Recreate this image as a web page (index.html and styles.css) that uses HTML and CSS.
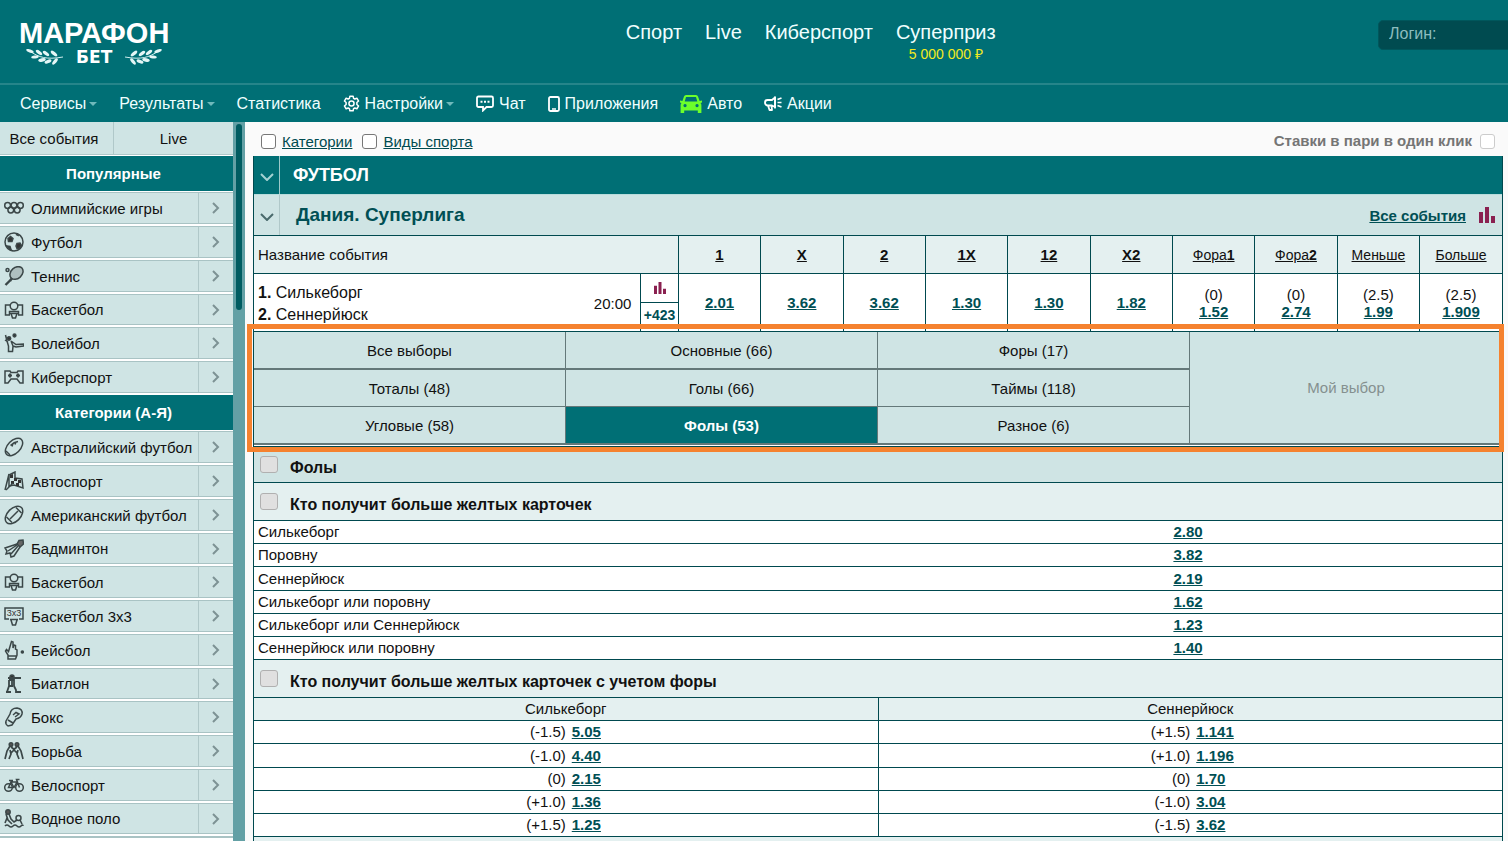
FILE: index.html
```html
<!DOCTYPE html>
<html lang="ru">
<head>
    <meta charset="UTF-8">
    <meta name="viewport" content="width=device-width, initial-scale=1.0">
    <title>Марафонбет</title>
    <link rel="stylesheet" href="styles.css">
</head>
<body>
    <!-- Icon set -->
    <svg class="sprite" xmlns="http://www.w3.org/2000/svg">
        <symbol id="arrow" viewBox="0 0 10 12"><path d="M2 1l5 5-5 5" fill="none" stroke="#7d9294" stroke-width="2"/></symbol>
        <symbol id="down" viewBox="0 0 14 8"><path d="M1 1l6 6 6-6" fill="none" stroke="currentColor" stroke-width="2"/></symbol>
        <symbol id="bars" viewBox="0 0 16 16"><path d="M0 5h4v11H0zM6 0h4v16H6zM12 9h4v7h-4z" fill="#8a2050"/></symbol>
        <symbol id="branch" viewBox="0 0 38 16">
            <path d="M5 3C13 8 20 11 37 8" fill="none" stroke="#cfeeee" stroke-width="1"/>
            <g fill="#e4f6f6">
                <ellipse cx="4" cy="2" rx="4" ry="1.5" transform="rotate(20 4 2)"/>
                <ellipse cx="13" cy="3.5" rx="3.8" ry="1.7" transform="rotate(38 13 3.5)"/>
                <ellipse cx="20" cy="4.5" rx="3.8" ry="1.7" transform="rotate(38 20 4.5)"/>
                <ellipse cx="28" cy="4.5" rx="4" ry="1.7" transform="rotate(40 28 4.5)"/>
                <ellipse cx="9" cy="8" rx="3.8" ry="1.5" transform="rotate(-8 9 8)"/>
                <ellipse cx="16" cy="11" rx="3.8" ry="1.7" transform="rotate(-12 16 11)"/>
                <ellipse cx="22" cy="12.5" rx="3.6" ry="1.7" transform="rotate(-20 22 12.5)"/>
                <ellipse cx="29" cy="12.5" rx="3.8" ry="1.7" transform="rotate(-50 29 12.5)"/>
            </g>
        </symbol>
        <symbol id="gear" viewBox="0 0 18 18"><path d="M7.3 1.2h3.4l.5 2.3 1.3.7 2.2-.8 1.8 3-1.8 1.6v2l1.8 1.6-1.8 3-2.2-.8-1.3.7-.5 2.3H7.3l-.5-2.3-1.3-.7-2.2.8-1.8-3L3.3 10V8L1.5 6.4l1.8-3 2.2.8 1.3-.7z" fill="none" stroke="#fff" stroke-width="1.6" stroke-linejoin="round"/><circle cx="9" cy="9" r="2.7" fill="none" stroke="#fff" stroke-width="1.6"/></symbol>
        <symbol id="chat" viewBox="0 0 18 17"><path d="M2.5 1.5h13q1.5 0 1.5 1.5v7.5q0 1.5-1.5 1.5h-5L7 15.5V12H2.5Q1 12 1 10.5V3q0-1.5 1.5-1.5z" fill="none" stroke="#fff" stroke-width="1.8"/><path d="M4.5 5.7h2v2h-2zM8 5.7h2v2H8zM11.5 5.7h2v2h-2z" fill="#fff"/></symbol>
        <symbol id="phone" viewBox="0 0 12 16"><rect x="1" y="1" width="10" height="14" rx="1.5" fill="none" stroke="#fff" stroke-width="1.8"/><path d="M4 13h4" stroke="#fff" stroke-width="1.5"/></symbol>
        <symbol id="car" viewBox="0 0 22 18"><path fill-rule="evenodd" d="M6 0h10q1.5 0 2 1.5L19.6 6 22 5.5v2l-1.5.6q.9.9.9 2.400V18h-3.600v-2.500H4.200V18H.6v-7.500q0-1.500.9-2.400L0 7.500v-2L2.400 6 4 1.500Q4.500 0 6 0zM6 2L4.700 6.500h12.600L16 2zM5 9a1.600 1.600 0 1 0 .1 0zM17 9a1.600 1.600 0 1 0 .1 0z" fill="#6cff2b"/></symbol>
        <symbol id="horn" viewBox="0 0 18 15"><path d="M11 1.5v9.500L8 9.500H3.500Q1 9 1 6.500T3.500 4H8zM4 9.500L5.500 14h2.500L7.500 9.500" fill="none" stroke="#fff" stroke-width="1.8" stroke-linejoin="round"/><path d="M11 .5v12M13.500 3.500l4-1.500M13.500 6.500h4M13.500 9.500l4 1.500" stroke="#fff" stroke-width="1.7"/></symbol>

        <symbol id="olympic" viewBox="0 0 20 20"><circle cx="3.6" cy="7.5" r="2.9"/><circle cx="10" cy="7.5" r="2.9"/><circle cx="16.4" cy="7.5" r="2.9"/><circle cx="6.8" cy="12" r="2.9"/><circle cx="13.2" cy="12" r="2.9"/></symbol>
        <symbol id="football" viewBox="0 0 20 20"><circle cx="10" cy="10" r="9"/><path d="M4 6.500l2.500-2L9 6.500 8 9.500H4.500zM13 11.500l3-.5 1.500 2.500-2 3H13l-1-2.500zM3 14l3 .5 1 3z" fill="#333"/><path d="M12 2l3 1.500" stroke-width="2"/></symbol>
        <symbol id="tennis" viewBox="0 0 20 20"><ellipse cx="12.5" cy="7" rx="7.3" ry="5.5" transform="rotate(-42 12.5 7)" fill="#aebfbf"/><path d="M8 12l-2 3M6.500 14L1.500 19" stroke-width="2.4"/><circle cx="3.5" cy="4" r="1.5"/></symbol>
        <symbol id="basketball" viewBox="0 0 20 20"><path d="M6 5H1.500v10h4.500M14 5h4.500v10H14M5.500 11.500h9v2h-9zM7 13.500l1.500 4.500h3l1.500-4.500"/><circle cx="10" cy="6" r="3.8"/></symbol>
        <symbol id="volleyball" viewBox="0 0 20 20"><circle cx="10.5" cy="2.5" r="1.4" fill="#333"/><circle cx="5" cy="5.5" r="1.7" fill="#333"/><path d="M1.500 2L3 8l1.500 5v5.500h4L9 13l-2-5M7 8l5 3.500 7.500-.5v2L12 14l-3-1M1 7l3 2"/></symbol>
        <symbol id="gamepad" viewBox="0 0 20 20"><path d="M1 4h5l1 1.500h6L14 4h5v12h-3l-3-4H7l-3 4H1z"/><path d="M4 8.500h4M6 6.500v4M12 8.500h4M14 6.500v4" stroke-width="2"/></symbol>
        <symbol id="aussie" viewBox="0 0 20 20"><ellipse cx="10" cy="10" rx="10.5" ry="6.3" transform="rotate(-45 10 10)"/><path d="M6.500 8.500Q10 5 14 4.500M8 9.500l1-3M11 7.500l1-2.500M2 14l4 4"/></symbol>
        <symbol id="flag" viewBox="0 0 20 20"><path d="M1 19L5 3M5 4l6-3v6l7 1 1 9-9-3-5 1z"/><path d="M6 4l3-1v4H6zM10 7h3v3h-3zM7 10h3v3H7zM14 9h3v3h-3zM12 12h3v3h-3z" fill="#333" stroke="none"/><path d="M2 19l7-7"/></symbol>
        <symbol id="amfoot" viewBox="0 0 20 20"><ellipse cx="10" cy="10" rx="10.5" ry="6.5" transform="rotate(-45 10 10)"/><path d="M6 14l8-8M2.500 12l5.500 5.500M12 2.500l5.500 5.500"/></symbol>
        <symbol id="badminton" viewBox="0 0 20 20"><path d="M13 5l2-3.500 4-.5.5 4L16 8z" fill="#666"/><path d="M13 5L1 9l2 3-1 3 4-1 1 4 3-1 6-9M13 6l-9 6M14 7l-7 8"/></symbol>
        <symbol id="hoop" viewBox="0 0 20 20"><path d="M5 13H1V2h18v11h-4M6 13.500h8M7 14l1.500 5h3l1.500-5"/></symbol>
        <symbol id="baseball" viewBox="0 0 20 20"><path d="M4 19v-4L1.500 11l1-1.500 2 2L7.500 1.500l1.500.5V8l1-3 1.500.5V9l1.500 1v5l-1.500 4zM4 16h8"/><circle cx="18.3" cy="12" r="1" fill="#333"/></symbol>
        <symbol id="biathlon" viewBox="0 0 20 20"><circle cx="8" cy="3" r="2" fill="#333"/><path d="M4 4h13M5 6v6l-2 6M5 6h5v6l2 4v2h5M5 12h4M8 6v7M7 18H2" stroke-width="1.8"/></symbol>
        <symbol id="boxing" viewBox="0 0 20 20"><path d="M2 14l4-7q1-6 7-6 6 1 5 6-1 4-6 5l-4 6-4 1q-3-2-2-5zM9 8l3-2.500 3 1.500-4 3M4 13l5 3"/></symbol>
        <symbol id="wrestling" viewBox="0 0 20 20"><circle cx="7" cy="3.5" r="1.8" fill="#555"/><circle cx="13" cy="3.5" r="1.8" fill="#555"/><path d="M6 5L3 10l-2 8M7 6l4 3M14 5l3 5 2 8M13 6L9 9M6 9l1 4-2 5M14 9l-1 4 2 5M7 12l3-3 3 3" stroke-width="1.7"/></symbol>
        <symbol id="bike" viewBox="0 0 20 20"><circle cx="4.5" cy="12.5" r="3.8"/><circle cx="15.5" cy="12.5" r="3.8"/><path d="M4.500 12.500L7 7h6l-3 5.500zM7 7l3 5.500M15.500 12.500L12.500 4.500h3M5 5.500h4M7 7V5.500"/></symbol>
        <symbol id="polo" viewBox="0 0 20 20"><circle cx="4" cy="3" r="2.2" fill="#555"/><circle cx="14.5" cy="9" r="2.5"/><path d="M2 5l2 6 4 4M5 5l2 5 3 3 3-2M16 11l2 4M3 9l-2 5M1 17q2-2 4 0t4 0 4 0 4 0 2 0" stroke-width="1.6"/></symbol>
    </svg>

    <header>
        <div class="top">
            <div class="logo">
                <a href="#" class="logoLink">
                    <span class="logoName">МАРАФОН</span>
                    <span class="logoBet">
                        <svg class="branch"><use href="#branch"/></svg>
                        <span>БЕТ</span>
                        <svg class="branch flip"><use href="#branch"/></svg>
                    </span>
                </a>
            </div>
            <nav class="mainNav">
                <a href="#">Спорт</a>
                <a href="#">Live</a>
                <a href="#">Киберспорт</a>
                <a href="#">Суперприз <small>5 000 000 ₽</small></a>
            </nav>
            <input type="text" class="login" placeholder="Логин:" aria-label="Логин">
        </div>
        <nav class="subNav">
            <a href="#" class="drop">Сервисы</a>
            <a href="#" class="drop">Результаты</a>
            <a href="#">Статистика</a>
            <a href="#" class="drop"><svg class="gear"><use href="#gear"/></svg>Настройки</a>
            <a href="#"><svg class="chat"><use href="#chat"/></svg>Чат</a>
            <a href="#"><svg class="phone"><use href="#phone"/></svg>Приложения</a>
            <a href="#"><svg class="car"><use href="#car"/></svg>Авто</a>
            <a href="#"><svg class="horn"><use href="#horn"/></svg>Акции</a>
        </nav>
    </header>

    <div class="page">
        <aside>
            <div class="sideTabs">
                <a href="#">Все события</a>
                <a href="#">Live</a>
            </div>
            <h2>Популярные</h2>
            <ul>
                <li><a href="#"><svg><use href="#olympic"/></svg><span>Олимпийские игры</span><i><svg><use href="#arrow"/></svg></i></a></li>
                <li><a href="#"><svg><use href="#football"/></svg><span>Футбол</span><i><svg><use href="#arrow"/></svg></i></a></li>
                <li><a href="#"><svg><use href="#tennis"/></svg><span>Теннис</span><i><svg><use href="#arrow"/></svg></i></a></li>
                <li><a href="#"><svg><use href="#basketball"/></svg><span>Баскетбол</span><i><svg><use href="#arrow"/></svg></i></a></li>
                <li><a href="#"><svg><use href="#volleyball"/></svg><span>Волейбол</span><i><svg><use href="#arrow"/></svg></i></a></li>
                <li><a href="#"><svg><use href="#gamepad"/></svg><span>Киберспорт</span><i><svg><use href="#arrow"/></svg></i></a></li>
            </ul>
            <h2>Категории (А-Я)</h2>
            <ul>
                <li><a href="#"><svg><use href="#aussie"/></svg><span>Австралийский футбол</span><i><svg><use href="#arrow"/></svg></i></a></li>
                <li><a href="#"><svg><use href="#flag"/></svg><span>Автоспорт</span><i><svg><use href="#arrow"/></svg></i></a></li>
                <li><a href="#"><svg><use href="#amfoot"/></svg><span>Американский футбол</span><i><svg><use href="#arrow"/></svg></i></a></li>
                <li><a href="#"><svg><use href="#badminton"/></svg><span>Бадминтон</span><i><svg><use href="#arrow"/></svg></i></a></li>
                <li><a href="#"><svg><use href="#basketball"/></svg><span>Баскетбол</span><i><svg><use href="#arrow"/></svg></i></a></li>
                <li><a href="#"><svg viewBox="0 0 20 20"><use href="#hoop"/><text x="10" y="10" class="three">3x3</text></svg><span>Баскетбол 3x3</span><i><svg><use href="#arrow"/></svg></i></a></li>
                <li><a href="#"><svg><use href="#baseball"/></svg><span>Бейсбол</span><i><svg><use href="#arrow"/></svg></i></a></li>
                <li><a href="#"><svg><use href="#biathlon"/></svg><span>Биатлон</span><i><svg><use href="#arrow"/></svg></i></a></li>
                <li><a href="#"><svg><use href="#boxing"/></svg><span>Бокс</span><i><svg><use href="#arrow"/></svg></i></a></li>
                <li><a href="#"><svg><use href="#wrestling"/></svg><span>Борьба</span><i><svg><use href="#arrow"/></svg></i></a></li>
                <li><a href="#"><svg><use href="#bike"/></svg><span>Велоспорт</span><i><svg><use href="#arrow"/></svg></i></a></li>
                <li><a href="#"><svg><use href="#polo"/></svg><span>Водное поло</span><i><svg><use href="#arrow"/></svg></i></a></li>
                <li class="blank"></li>
            </ul>
        </aside>
        <div class="scroll"><div class="thumb"></div></div>

        <main>
            <div class="filters">
                <input type="checkbox" id="cats"><label for="cats">Категории</label>
                <input type="checkbox" id="sports"><label for="sports">Виды спорта</label>
                <label for="oneClick" class="oneClick">Ставки в пари в один клик</label>
                <input type="checkbox" id="oneClick" disabled>
            </div>

            <div class="board">
                <div class="sportTitle">
                    <button type="button" aria-label="Свернуть"><svg><use href="#down"/></svg></button>
                    <h1>ФУТБОЛ</h1>
                </div>
                <div class="leagueTitle">
                    <button type="button" aria-label="Свернуть"><svg><use href="#down"/></svg></button>
                    <h2>Дания. Суперлига</h2>
                    <a href="#">Все события</a>
                    <svg class="bars"><use href="#bars"/></svg>
                </div>

                <table class="event">
                    <colgroup><col class="name"><col class="more"><col span="10"></colgroup>
                    <tr>
                        <th colspan="2">Название события</th>
                        <th><a href="#"><b>1</b></a></th>
                        <th><a href="#"><b>X</b></a></th>
                        <th><a href="#"><b>2</b></a></th>
                        <th><a href="#"><b>1X</b></a></th>
                        <th><a href="#"><b>12</b></a></th>
                        <th><a href="#"><b>X2</b></a></th>
                        <th class="small"><a href="#">Фора<b>1</b></a></th>
                        <th class="small"><a href="#">Фора<b>2</b></a></th>
                        <th class="small"><a href="#">Меньше</a></th>
                        <th class="small"><a href="#">Больше</a></th>
                    </tr>
                    <tr>
                        <td class="teams">
                            <div>
                                <p><b>1.</b> Силькеборг<br><b>2.</b> Сеннерйюск</p>
                                <time>20:00</time>
                            </div>
                        </td>
                        <td class="extra">
                            <a href="#" aria-label="Статистика"><svg><use href="#bars"/></svg></a>
                            <a href="#" class="count">+423</a>
                        </td>
                        <td><a href="#">2.01</a></td>
                        <td><a href="#">3.62</a></td>
                        <td><a href="#">3.62</a></td>
                        <td><a href="#">1.30</a></td>
                        <td><a href="#">1.30</a></td>
                        <td><a href="#">1.82</a></td>
                        <td>(0)<br><a href="#">1.52</a></td>
                        <td>(0)<br><a href="#">2.74</a></td>
                        <td>(2.5)<br><a href="#">1.99</a></td>
                        <td>(2.5)<br><a href="#">1.909</a></td>
                    </tr>
                </table>

                <div class="markets">
                    <button type="button">Все выборы</button>
                    <button type="button">Основные (66)</button>
                    <button type="button">Форы (17)</button>
                    <button type="button" class="mine" disabled>Мой выбор</button>
                    <button type="button">Тоталы (48)</button>
                    <button type="button">Голы (66)</button>
                    <button type="button">Таймы (118)</button>
                    <button type="button">Угловые (58)</button>
                    <button type="button" class="active">Фолы (53)</button>
                    <button type="button">Разное (6)</button>
                </div>

                <div class="section main">
                    <input type="checkbox" id="s1"><label for="s1">Фолы</label>
                </div>

                <div class="section">
                    <input type="checkbox" id="s2"><label for="s2">Кто получит больше желтых карточек</label>
                </div>
                <table class="odds">
                    <tr><td>Силькеборг</td><td><a href="#">2.80</a></td></tr>
                    <tr><td>Поровну</td><td><a href="#">3.82</a></td></tr>
                    <tr><td>Сеннерйюск</td><td><a href="#">2.19</a></td></tr>
                    <tr><td>Силькеборг или поровну</td><td><a href="#">1.62</a></td></tr>
                    <tr><td>Силькеборг или Сеннерйюск</td><td><a href="#">1.23</a></td></tr>
                    <tr><td>Сеннерйюск или поровну</td><td><a href="#">1.40</a></td></tr>
                </table>

                <div class="section">
                    <input type="checkbox" id="s3"><label for="s3">Кто получит больше желтых карточек с учетом форы</label>
                </div>
                <table class="odds handicap">
                    <tr><th>Силькеборг</th><th>Сеннерйюск</th></tr>
                    <tr><td><div><span>(-1.5)</span><a href="#">5.05</a></div></td><td><div><span>(+1.5)</span><a href="#">1.141</a></div></td></tr>
                    <tr><td><div><span>(-1.0)</span><a href="#">4.40</a></div></td><td><div><span>(+1.0)</span><a href="#">1.196</a></div></td></tr>
                    <tr><td><div><span>(0)</span><a href="#">2.15</a></div></td><td><div><span>(0)</span><a href="#">1.70</a></div></td></tr>
                    <tr><td><div><span>(+1.0)</span><a href="#">1.36</a></div></td><td><div><span>(-1.0)</span><a href="#">3.04</a></div></td></tr>
                    <tr><td><div><span>(+1.5)</span><a href="#">1.25</a></div></td><td><div><span>(-1.5)</span><a href="#">3.62</a></div></td></tr>
                </table>
                <div class="section"></div>
            </div>
        </main>
    </div>
</body>
</html>
```
FILE: styles.css
```css
* {
    box-sizing: border-box;
    padding: 0;
    margin: 0;
}

body {
    display: flex;
    flex-direction: column;
    height: 100vh;
    overflow: hidden;
    background-color: #fafafa;
    color: #111;
    font-family: "Liberation Sans", Arial, sans-serif;
    font-size: 15px;
}
a {
    color: inherit;
}
ul {
    list-style: none;
}
button, input {
    font: inherit;
    color: inherit;
}
.sprite {
    position: absolute;
    width: 0;
    height: 0;
}

/* Header */
header {
    flex-shrink: 0;
    background-color: #006f75;
    color: #f0ffff;
    overflow: hidden;
}
header a {
    text-decoration: none;
}
.top {
    display: flex;
    align-items: flex-start;
    height: 85px;
    border-bottom: 2px solid #26858a;
}
.logo {
    flex: 0 0 41.5%;
    padding: 18px 0 0 19px;
}
.logoLink {
    display: inline-flex;
    flex-direction: column;
    align-items: center;
    color: #fff;
    font-weight: bold;
}
.logoName {
    font-size: 29px;
    line-height: 30px;
}
.logoBet {
    display: flex;
    align-items: center;
    gap: 12px;
    font-family: "DejaVu Sans", sans-serif;
    font-size: 17px;
    line-height: 18px;
}
.branch {
    width: 38px;
    height: 16px;
}
.flip {
    transform: scaleX(-1);
}
.mainNav {
    display: flex;
    gap: 23px;
    padding-top: 20px;
    font-size: 20px;
    line-height: 24px;
}
.mainNav small {
    display: block;
    color: #f2ea1f;
    font-size: 14px;
    line-height: 20px;
    text-align: center;
}
.login {
    width: 200px;
    height: 30px;
    margin: 20px -70px 0 auto;
    padding: 0 10px 2px;
    border: 1px solid #00575c;
    border-radius: 5px;
    background-color: #004b50;
    font-size: 16px;
}
.login::placeholder {
    color: #8dbdbf;
    opacity: 1;
}
.subNav {
    display: flex;
    align-items: center;
    gap: 22px;
    height: 37px;
    padding-left: 20px;
    font-size: 16px;
}
.subNav a {
    display: flex;
    align-items: center;
}
.drop::after {
    content: "";
    margin-left: 3px;
    border: 4px solid transparent;
    border-top-color: #6fb9bb;
    border-bottom: 0;
}
.subNav svg {
    margin-right: 5px;
}
.gear {
    width: 17px;
    height: 17px;
}
.chat {
    width: 18px;
    height: 17px;
}
.phone {
    width: 12px;
    height: 16px;
}
.car {
    width: 22px;
    height: 18px;
}
.horn {
    width: 18px;
    height: 15px;
}

/* Layout */
.page {
    display: flex;
    flex: 1;
    min-height: 0;
}
aside {
    flex: 0 0 233px;
    overflow: hidden;
    background-color: #fff;
}
.scroll {
    flex: 0 0 12px;
    padding: 2px 3px;
    background-color: #63a0a5;
}
.thumb {
    height: 186px;
    border-radius: 3px;
    background-color: #005c61;
}
main {
    flex: 1;
    min-width: 0;
    padding: 0 5px 0 8px;
    overflow: hidden;
}

/* Sidebar */
.sideTabs {
    display: flex;
    height: 33px;
    margin-bottom: 1px;
    border-bottom: 1px solid #b0c8c9;
    background-color: #cfe4e4;
    line-height: 34px;
    text-align: center;
}
.sideTabs a {
    flex: 1;
    text-decoration: none;
}
.sideTabs a:first-child {
    flex: 0 0 114px;
    padding-right: 5px;
    border-right: 1px solid #b0c8c9;
}
aside h2 {
    height: 35px;
    margin-bottom: 1px;
    padding-right: 6px;
    background-color: #006f75;
    color: #fff;
    font-size: 15px;
    line-height: 35px;
    text-align: center;
}
aside li {
    height: 34px;
    border-bottom: 2px solid #fff;
}
aside li:nth-child(4n) {
    height: 33px;
}
aside li a, .blank {
    display: flex;
    align-items: center;
    height: 100%;
    padding-left: 4px;
    border: solid #a9c3c4;
    border-width: 1px 0;
    background-color: #cfe4e4;
    text-decoration: none;
}
aside li a > svg {
    width: 20px;
    height: 20px;
    fill: none;
    stroke: #3b4748;
    stroke-width: 1.5;
}
aside .three {
    fill: #333;
    stroke: none;
    font-size: 9px;
    text-anchor: middle;
}
aside li span {
    flex: 1;
    padding-left: 7px;
    white-space: nowrap;
}
aside li i {
    display: flex;
    align-items: center;
    justify-content: center;
    width: 35px;
    height: 100%;
    border-left: 1px solid #b0c8c9;
}
aside li i svg {
    width: 10px;
    height: 12px;
}

/* Filters */
.filters {
    display: flex;
    align-items: center;
    gap: 6px;
    height: 34px;
    padding: 5px 8px 0 8px;
}
.filters input {
    appearance: none;
    width: 15px;
    height: 15px;
    border: 1px solid #777;
    border-radius: 3px;
    background-color: #fff;
}
.filters input:disabled {
    border-color: #ccc;
}
.filters label {
    margin-right: 4px;
    color: #004b50;
    text-decoration: underline;
}
.filters .oneClick {
    margin: 0 2px 3px auto;
    color: #757575;
    font-weight: bold;
    text-decoration: none;
}

/* Event board */
.board {
    border: solid #00494f;
    border-width: 0 1px;
}
.board a {
    color: #004f54;
    font-weight: bold;
}
.sportTitle, .leagueTitle {
    display: flex;
    align-items: center;
}
.sportTitle {
    height: 39px;
    border-bottom: 1px solid #b8dcdc;
    background-color: #006f75;
    color: #fff;
}
.leagueTitle {
    height: 40px;
    padding-right: 7px;
    background-color: #cfe4e4;
    color: #004f54;
}
.board > div > button[aria-label] {
    width: 26px;
    height: 100%;
    border: 0;
    border-right: 1px solid #9cc9ca;
    background: none;
    color: #a4d2d3;
}
.board .leagueTitle > button[aria-label] {
    border-color: #b0c8c9;
    color: #4a6a6c;
}
.board button svg {
    width: 14px;
    height: 8px;
}
.sportTitle h1 {
    padding-left: 13px;
    font-size: 18px;
}
.leagueTitle h2 {
    flex: 1;
    padding-left: 16px;
    font-size: 19px;
}
.leagueTitle .bars {
    width: 16px;
    height: 16px;
    margin-left: 13px;
}

table {
    width: 100%;
    border-collapse: collapse;
    table-layout: fixed;
}
th {
    font-weight: normal;
}
.event .name {
    width: 31%;
}
.event .more {
    width: 3%;
}
.event th, .event td {
    border: 1px solid #00494f;
    text-align: center;
}
.event tr > :first-child, .odds tr > :first-child {
    border-left: 0;
}
.event tr > :last-child, .odds tr > :last-child {
    border-right: 0;
}
.event th {
    height: 38px;
    background-color: #e4f0f0;
}
.event th a {
    color: #111;
    font-weight: normal;
}
.event .small {
    font-size: 14px;
}
.event th:first-child {
    padding-left: 4px;
    text-align: left;
}
.event td {
    height: 58px;
    background-color: #fff;
    line-height: 17px;
}
.teams > div {
    display: flex;
    align-items: center;
    justify-content: space-between;
    padding: 2px 9px 0 4px;
    line-height: 22px;
    text-align: left;
}
.teams p {
    font-size: 16px;
}
.event .extra {
    vertical-align: top;
}
.extra a {
    display: block;
    height: 28px;
    padding-top: 7px;
    font-size: 14px;
    text-decoration: none;
}
.extra svg {
    width: 14px;
    height: 12px;
}
.extra .count {
    padding-top: 4px;
    border-top: 1px solid #00494f;
}

/* Market tabs with the orange frame around them */
.markets {
    position: relative;
    display: grid;
    grid-template-columns: repeat(4, 1fr);
    grid-template-rows: 38px 37px 38px;
    border-bottom: 1px solid #00494f;
    background-color: #fff;
    padding-bottom: 1px;
}
.markets::after {
    content: "";
    position: absolute;
    inset: -8px -2px -6px -7px;
    border: 5px solid #f5822f;
    pointer-events: none;
}
.markets button {
    border: solid #647879;
    border-width: 0 1px 1px 0;
    background-color: #cfe4e4;
}
.markets button:nth-child(-n+3), .markets button:nth-child(n+8) {
    border-bottom-width: 2px;
}
.markets .mine {
    grid-row: span 3;
    grid-column: 4;
    border-width: 0 0 2px;
    color: #85908f;
}
.markets .active {
    background-color: #006f75;
    color: #fff;
    font-weight: bold;
}

/* Sections */
.section {
    display: flex;
    align-items: center;
    gap: 12px;
    height: 37px;
    padding-left: 6px;
    background-color: #e4f0f0;
    font-size: 16px;
    font-weight: bold;
}
.section.main {
    height: 36px;
    border-bottom: 1px solid #00494f;
    background-color: #cfe4e4;
}
.section input {
    appearance: none;
    width: 18px;
    height: 17px;
    border: 1px solid #b0b0b0;
    border-radius: 3px;
    background-color: #e0e0e0;
}
.section label {
    padding-top: 6px;
}

/* Odds tables */
.odds th, .odds td {
    height: 23px;
    border: 1px solid #00494f;
    line-height: 18px;
    text-align: center;
}
.odds tr:nth-child(3) > * {
    height: 24px;
}
.odds td {
    background-color: #fff;
}
.odds th {
    background-color: #e4f0f0;
}
.odds:not(.handicap) td {
    padding-right: 4px;
    border-width: 1px 0;
}
.odds:not(.handicap) td:first-child {
    padding-left: 4px;
    text-align: left;
}
.handicap div {
    display: grid;
    grid-template-columns: 1fr 1fr;
    gap: 6px;
    padding-left: 6px;
    text-align: left;
}
.handicap span {
    text-align: right;
}
```
